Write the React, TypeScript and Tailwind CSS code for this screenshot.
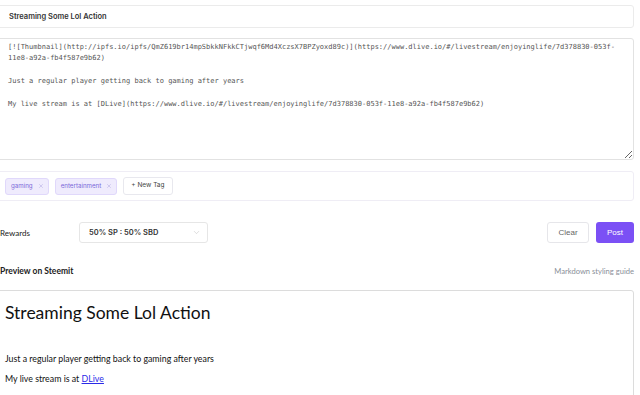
import { ChevronDown, X } from "lucide-react";

const body =
  "[![Thumbnail](http://ipfs.io/ipfs/QmZ619br14mpSbkkNFkkCTjwqf6Md4XczsX7BPZyoxd89c)](https://www.dlive.io/#/livestream/enjoyinglife/7d378830-053f-\n11e8-a92a-fb4f587e9b62)\n\nJust a regular player getting back to gaming after years\n\nMy live stream is at [DLive](https://www.dlive.io/#/livestream/enjoyinglife/7d378830-053f-11e8-a92a-fb4f587e9b62)";

function Tag({ label }: { label: string }) {
  return (
    <span className="flex items-center gap-[5px] h-[17px] pl-[5px] pr-[4px] rounded-[3px] bg-[#efebfd] border border-[#e0d8fb] text-[6.2px] text-[#7b68d9]">
      {label}
      <X size={6} strokeWidth={1.5} className="text-[#9a8fd8]" />
    </span>
  );
}

export default function App() {
  return (
    <div className="w-[640px] h-[395px] overflow-hidden bg-white font-['Inter',sans-serif]">
      <div className="-ml-[3px] w-[637px] pt-[5px]">
        <div className="h-[23px] border border-[#ebebeb] rounded-[3px] flex items-center pl-[11px] text-[7.5px] font-semibold text-[#333]">
          Streaming Some Lol Action
        </div>

        <textarea
          readOnly
          value={body}
          className="mt-[10px] block w-full h-[122px] border border-[#e2e2e2] rounded-[3px] pl-[10px] pr-[6px] pt-[3px] text-[7px] leading-[11.4px] text-[#555] font-['DejaVu_Sans_Mono',monospace] outline-none"
        />

        <div className="mt-[11px] h-[30px] border border-[#efedf5] rounded-[3px] flex items-center gap-[6px] pl-[7px]">
          <Tag label="gaming" />
          <Tag label="entertainment" />
          <span className="flex items-center h-[18px] px-[7px] rounded-[3px] border border-[#e8e8ee] text-[6.5px] text-[#444]">
            + New Tag
          </span>
        </div>

        <div className="mt-[21px] flex items-center pl-[3px]">
          <span className="w-[79px] text-[8px] text-[#222] font-['Lato',sans-serif]">Rewards</span>
          <div className="w-[129px] h-[21px] border border-[#e6e6e6] rounded-[3px] flex items-center justify-between pl-[9px] pr-[6px]">
            <span className="text-[7.5px] font-semibold text-[#333]">50% SP : 50% SBD</span>
            <ChevronDown size={9} strokeWidth={1} className="text-[#aaa]" />
          </div>
          <div className="ml-auto flex gap-[7px]">
            <button className="w-[42px] h-[21px] border border-[#e6e6ea] rounded-[3px] text-[8px] text-[#666] font-['Liberation_Sans',sans-serif]">
              Clear
            </button>
            <button className="w-[38px] h-[21px] rounded-[3px] bg-[#7b50f5] text-[8px] text-white font-['Liberation_Sans',sans-serif]">
              Post
            </button>
          </div>
        </div>

        <div className="mt-[22px] flex items-center justify-between pl-[3px] font-['Lato',sans-serif]">
          <span className="text-[8.5px] font-bold text-[#222]">Preview on Steemit</span>
          <span className="text-[7.6px] text-[#8a8f99]">Markdown styling guide</span>
        </div>

        <div className="mt-[12px] h-[200px] border border-[#dcdcdc] rounded-[3px] pl-[7px] pt-[9px] font-['Lato',sans-serif] text-[#111]">
          <h1 className="text-[17.5px] leading-[26px] font-normal">Streaming Some Lol Action</h1>
          <p className="mt-[27px] text-[8.8px] leading-[12px]">Just a regular player getting back to gaming after years</p>
          <p className="mt-[8px] text-[8.8px] leading-[12px]">
            My live stream is at{" "}
            <a href="#" className="text-[#2a2ae8] underline">DLive</a>
          </p>
        </div>
      </div>
    </div>
  );
}
